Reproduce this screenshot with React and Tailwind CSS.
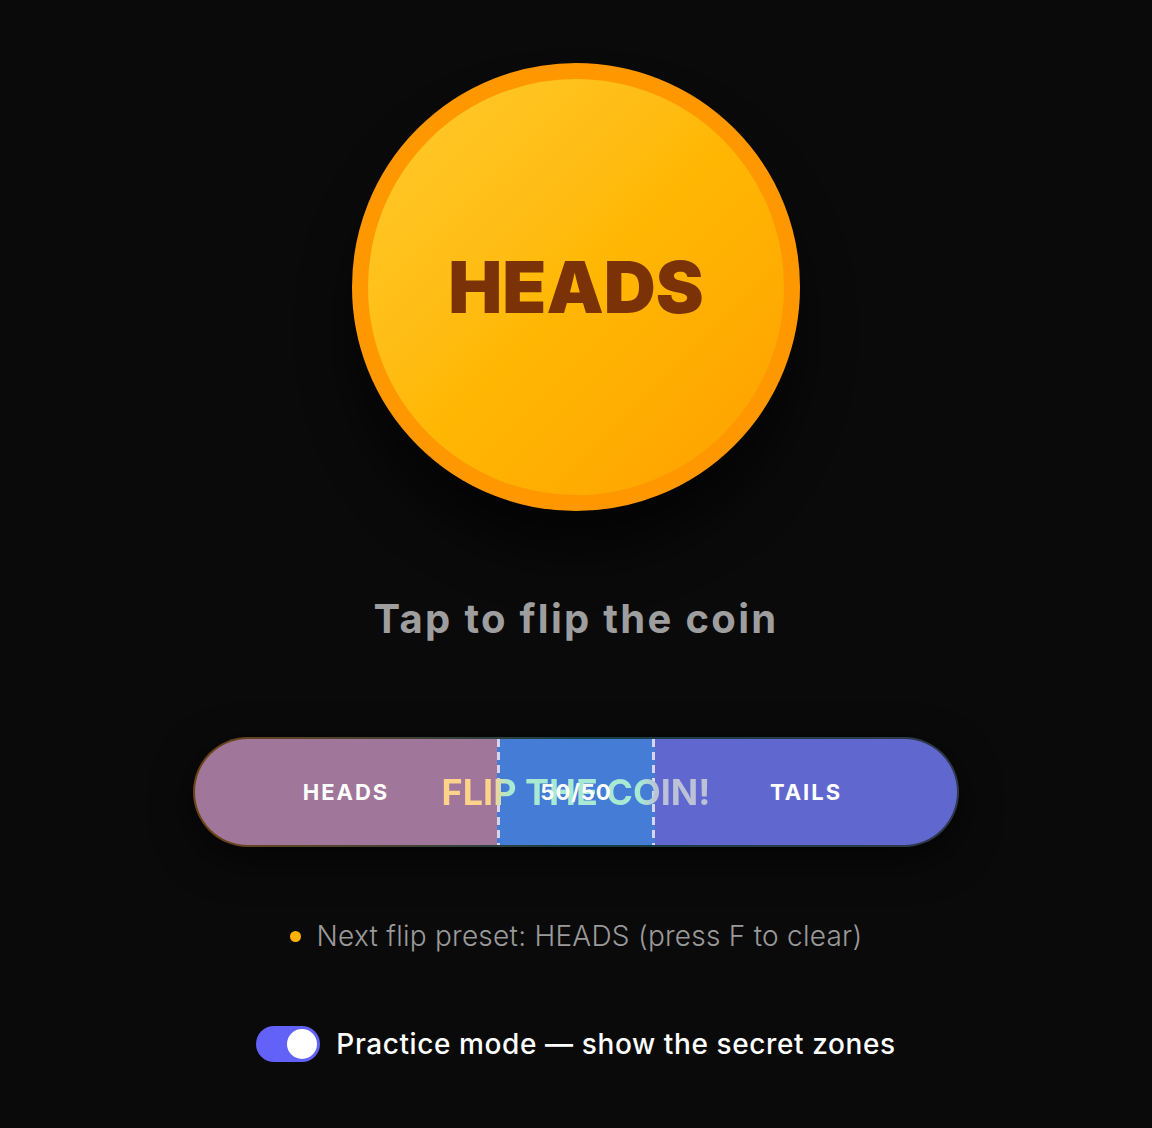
import { useState } from 'react';

function Coin({ side }) {
  return (
    <button
      className="w-[448px] h-[448px] rounded-full border-[16px] border-[#ff9800] bg-gradient-to-br from-[#ffcb2b] via-[#ffb703] to-[#ff9f00] shadow-[0_44px_50px_rgba(0,0,0,0.6)] flex items-center justify-center"
    >
      <span className="text-[72px] font-black leading-none text-[#7a3206]">
        {side}
      </span>
    </button>
  );
}

function Divider() {
  return <div className="w-[3px] h-full bg-[#457dd6] bg-[repeating-linear-gradient(to_bottom,#d6d4ee_0px,#d6d4ee_8px,transparent_8px,transparent_13px)]" />;
}

function ZoneBar() {
  return (
    <div className="relative w-[766px] h-[110px] rounded-full p-[2px] bg-gradient-to-r from-[#6e4412] via-[#123e44] to-[#2f3a4c] shadow-[0_12px_40px_rgba(0,0,0,0.6)]">
      <div className="relative w-full h-full rounded-full overflow-hidden flex">
        <div className="w-[302px] h-full bg-[#a0769a] flex items-center justify-center">
          <span className="relative z-10 text-[22px] font-bold tracking-[2px] text-white">HEADS</span>
        </div>
        <Divider />
        <div className="flex-1 h-full bg-[#457dd6] flex items-center justify-center">
          <span className="relative z-10 text-[22px] font-bold tracking-[1px] text-white">50/50</span>
        </div>
        <Divider />
        <div className="w-[302px] h-full bg-[#6068d0] flex items-center justify-center">
          <span className="relative z-10 text-[22px] font-bold tracking-[2px] text-white">TAILS</span>
        </div>
        <div className="absolute inset-0 flex items-center justify-center pointer-events-none">
          <span className="text-[36px] font-bold leading-none bg-[linear-gradient(90deg,#fdd38c_0%,#fdd38c_19%,#a7e9d2_25%,#a7e9d2_74%,#bcc2d6_80%)] bg-clip-text text-transparent">
            FLIP THE COIN!
          </span>
        </div>
      </div>
    </div>
  );
}

export default function App() {
  const [practice, setPractice] = useState(true);

  return (
    <div className="min-h-[1128px] bg-[#0a0a0a] flex flex-col items-center pt-[63px]" style={{ fontFamily: 'Inter, "Noto Sans", sans-serif' }}>
      <Coin side="HEADS" />

      <p className="mt-[84px] text-[40px] leading-[48px] font-bold tracking-[2.3px] text-[#9e9e9e]">
        Tap to flip the coin
      </p>

      <div className="mt-[94px]">
        <ZoneBar />
      </div>

      <div className="mt-[71px] flex items-center gap-4 h-9">
        <span className="w-[11px] h-[11px] rounded-full bg-[#ffb300]" />
        <span className="text-[28px] leading-9 font-light tracking-[0.25px] text-[#9a9a9a]">Next flip preset: HEADS (press F to clear)</span>
      </div>

      <label className="mt-[72px] flex items-center gap-4 cursor-pointer">
        <button
          onClick={() => setPractice(!practice)}
          className={'w-16 h-9 rounded-full p-[3px] flex items-center ' + (practice ? 'bg-[#6262f8] justify-end' : 'bg-gray-600 justify-start')}
        >
          <span className="w-[30px] h-[30px] rounded-full bg-white" />
        </button>
        <span className="text-[28px] leading-9 font-medium tracking-[0.6px] text-white">Practice mode — show the secret zones</span>
      </label>
    </div>
  );
}
